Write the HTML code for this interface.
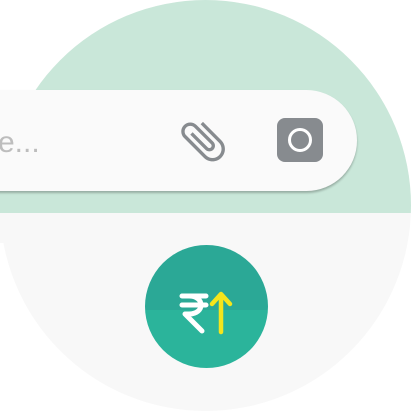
<!DOCTYPE html>
<html><head><style>
html,body{margin:0;padding:0;background:#fff;}
.wrap{position:relative;width:411px;height:411px;border-radius:50%;overflow:hidden;background:#f8f8f8;}
.top{position:absolute;left:0;top:0;width:411px;height:213px;background:#c9e7d9;}
.strip{position:absolute;left:0;top:185px;width:60px;height:28px;background:#c9e7d9;}
.strip2{position:absolute;left:0;top:213px;width:40px;height:30px;background:#f8f8f8;}
.bar{position:absolute;left:-60px;top:90px;width:417px;height:101px;background:#fafafa;border-radius:0 51px 51px 0;box-shadow:0 2px 2px rgba(0,0,0,.25);}
.txt{position:absolute;left:-2px;top:126px;font:30px "Liberation Sans",sans-serif;color:#bdbdbd;}
.cam{position:absolute;left:277px;top:118px;width:46px;height:44px;background:#878b8f;border-radius:8px;}
.cam:after{content:"";position:absolute;left:11px;top:10px;width:18px;height:18px;border:3px solid #fff;border-radius:50%;}
.fab{position:absolute;left:145px;top:245px;width:123px;height:123px;border-radius:50%;overflow:hidden;background:linear-gradient(#2ba896 0,#2ba896 53%,#2bb49b 53%);}
</style></head><body>
<div class="wrap">
<div class="top"></div>
<div class="fab"></div>
</div>
<div class="strip"></div>
<div class="strip2"></div>
<div class="bar"></div>
<div class="txt">e...</div>
<svg style="position:absolute;left:176px;top:114px" width="54" height="54" viewBox="0 0 24 24"><g transform="rotate(-45 12 12)"><path fill="#878b8f" d="M16.5 6v11.5c0 2.21-1.79 4-4 4s-4-1.79-4-4V5c0-1.38 1.12-2.5 2.5-2.5s2.5 1.12 2.5 2.5v10.5c0 .55-.45 1-1 1s-1-.45-1-1V6H10v9.5c0 1.380 1.12 2.5 2.5 2.5s2.5-1.12 2.5-2.5V5c0-2.21-1.79-4-4-4S7 2.79 7 5v12.5c0 3.04 2.46 5.5 5.5 5.5s5.5-2.46 5.5-5.5V6h-1.5z"/></g></svg>
<div class="cam"></div>
<svg style="position:absolute;left:175px;top:290px" width="70" height="45" viewBox="0 0 70 45">
<g fill="none" stroke="#fff" stroke-width="5" stroke-linecap="round" stroke-linejoin="round">
<path d="M7 6H31M7 15H31M14 6C30 6 30 24 14 24H10L27 41"/>
</g>
<g fill="none" stroke="#f5e51c" stroke-width="4.5" stroke-linecap="round" stroke-linejoin="round">
<path d="M46 42V5M37 14L46 4L55 14"/>
</g>
</svg>
</body></html>
